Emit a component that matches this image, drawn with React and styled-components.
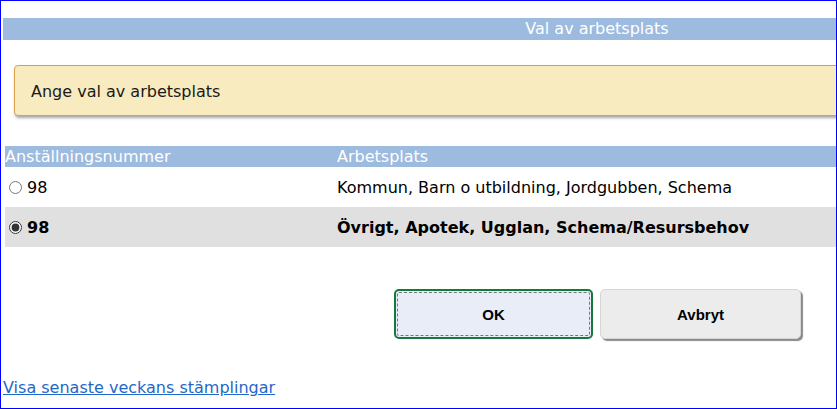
import React, { useState } from "react"
import styled, { createGlobalStyle } from "styled-components"

const GlobalStyle = createGlobalStyle`
html, body {
    margin: 0;
    padding: 0;
    background: #fff;
}
body {
    font-family: "DejaVu Sans", Verdana, sans-serif;
    color: #111;
}
`

const Frame = styled.div`
box-sizing: border-box;
width: 837px;
height: 409px;
border: 1px solid #0000ff;
overflow: hidden;
padding: 17px 0 0 2px;
display: flex;
flex-direction: column;
`

const TitleBar = styled.div`
width: 1188px;
height: 22px;
flex-shrink: 0;
background: #9dbadf;
color: #fff;
font-size: 16px;
line-height: 22px;
text-align: center;
`

const Notice = styled.div`
box-sizing: border-box;
width: 1100px;
height: 51px;
flex-shrink: 0;
margin: 25px 0 0 11px;
background: #f8ebc0;
border: 1px solid #d9a24a;
border-radius: 4px;
box-shadow: 1px 2px 3px rgba(0, 0, 0, 0.35);
padding: 1px 0 0 16px;
display: flex;
align-items: center;
font-size: 16px;
color: #1a1a1a;
`

const Table = styled.div`
margin: 30px 0 0 2px;
display: flex;
flex-direction: column;
`

const HeaderRow = styled.div`
display: grid;
grid-template-columns: 332px 1fr;
height: 21px;
background: #9dbadf;
color: #fff;
font-size: 16px;
line-height: 22px;
`

const Row = styled.label`
display: grid;
grid-template-columns: 332px 1fr;
align-items: center;
height: 40px;
font-size: 16px;
background: ${p => (p.$selected ? "#e0e0e0" : "#fff")};
font-weight: ${p => (p.$selected ? "bold" : "normal")};
color: #000;
cursor: pointer;
`

const NumberCell = styled.span`
display: flex;
align-items: center;
gap: 5px;
padding-left: 4px;
`

const Radio = styled.input`
margin: 0;
width: 13px;
height: 13px;
accent-color: #333;
`

const Buttons = styled.div`
display: flex;
gap: 7px;
margin: 42px 0 0 391px;
`

const Button = styled.button`
box-sizing: border-box;
height: 50px;
width: ${p => (p.$primary ? "199px" : "201px")};
border-radius: 5px;
font-family: "Liberation Sans", Arial, sans-serif;
font-weight: bold;
font-size: 15px;
color: #000;
cursor: pointer;
background: ${p => (p.$primary ? "#e9edf7" : "#ececec")};
border: ${p => (p.$primary ? "2px solid #137a3c" : "1px solid #d6d6d6")};
box-shadow: ${p => (p.$primary ? "none" : "2px 2px 1px #8a8a8a")};
outline: ${p => (p.$primary ? "1px dashed #777" : "none")};
outline-offset: -4px;
`

const Link = styled.a`
margin: 39px 0 0 0;
align-self: flex-start;
font-size: 16px;
color: #1f68c8;
text-decoration: underline;
`

const rows = [
    { nr: "98", place: "Kommun, Barn o utbildning, Jordgubben, Schema" },
    { nr: "98", place: "Övrigt, Apotek, Ugglan, Schema/Resursbehov" },
]

const App = () => {
    const [selected, setSelected] = useState(1)
    return (
        <>
            <GlobalStyle />
            <Frame>
                <TitleBar>Val av arbetsplats</TitleBar>
                <Notice>Ange val av arbetsplats</Notice>
                <Table>
                    <HeaderRow>
                        <span>Anställningsnummer</span>
                        <span>Arbetsplats</span>
                    </HeaderRow>
                    {rows.map((r, i) => (
                        <Row key={i} $selected={selected === i}>
                            <NumberCell>
                                <Radio
                                    type="radio"
                                    name="arbetsplats"
                                    checked={selected === i}
                                    onChange={() => setSelected(i)}
                                />
                                {r.nr}
                            </NumberCell>
                            <span>{r.place}</span>
                        </Row>
                    ))}
                </Table>
                <Buttons>
                    <Button $primary>OK</Button>
                    <Button>Avbryt</Button>
                </Buttons>
                <Link href="#">Visa senaste veckans stämplingar</Link>
            </Frame>
        </>
    )
}

export default App
